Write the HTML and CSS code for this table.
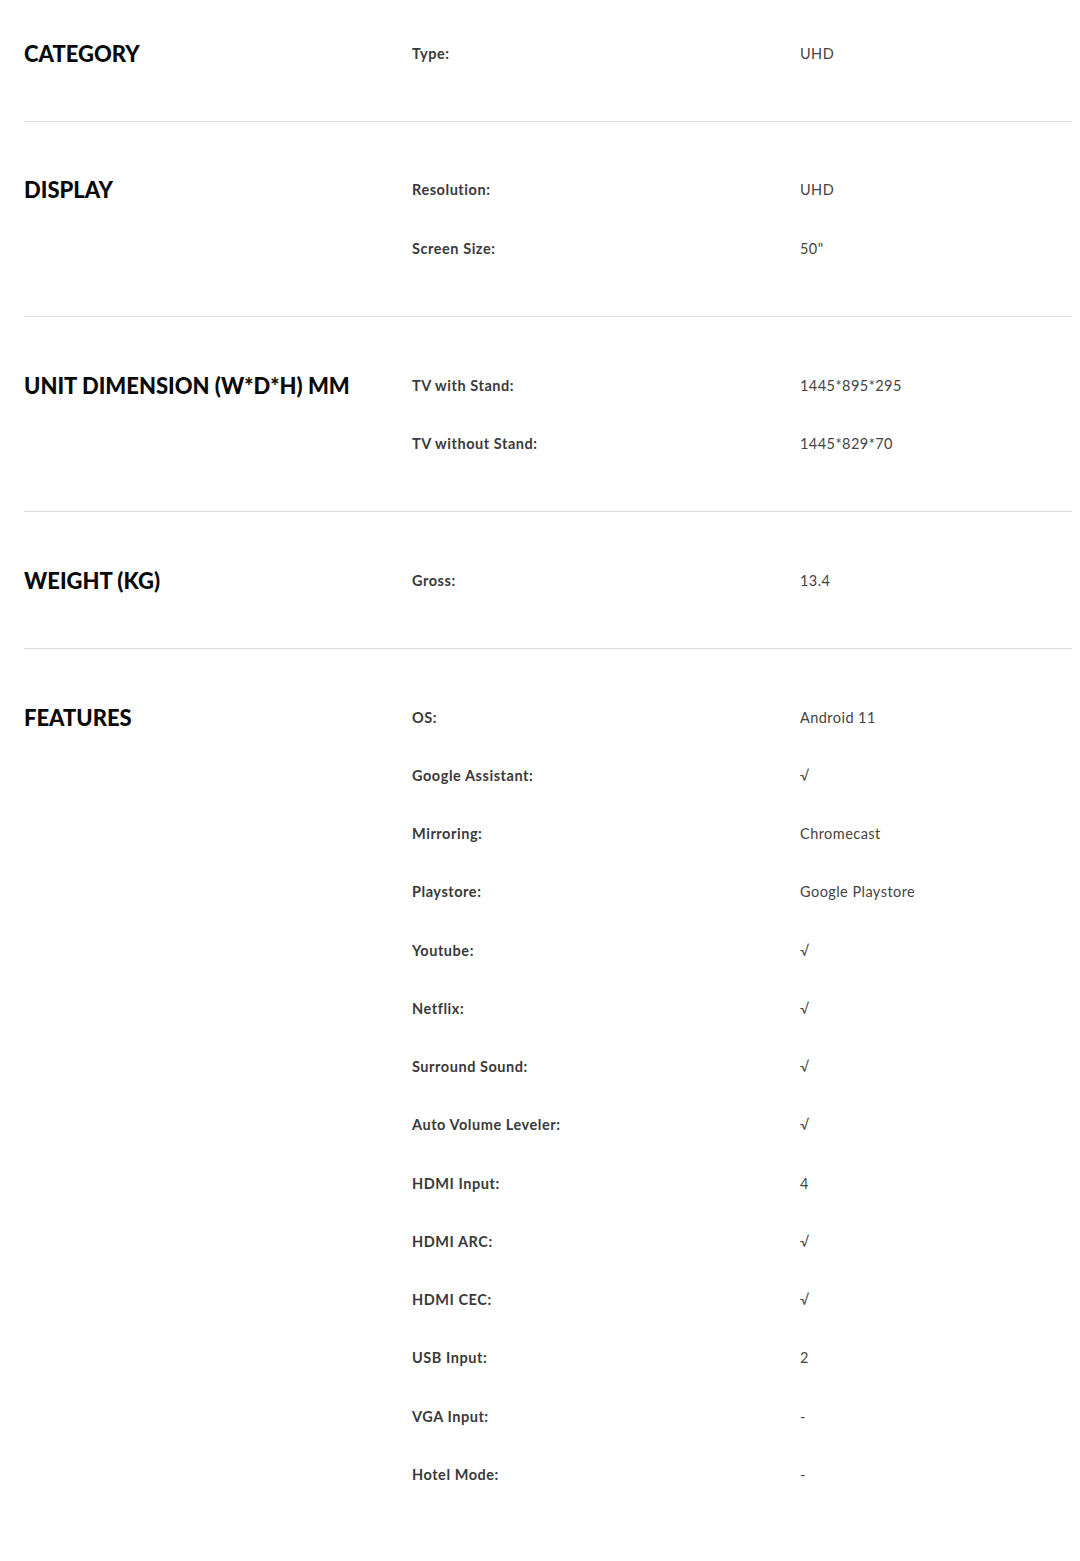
FILE: index.html
```html
<!DOCTYPE html>
<html lang="en">
<head>
<meta charset="utf-8">
<title>Specifications</title>
<link rel="stylesheet" href="styles.css">
</head>
<body>
<div class="specs">
  <section class="group first">
    <h2 class="group-title">CATEGORY</h2>
    <div class="rows">
      <div class="row"><span class="label">Type:</span><span class="value">UHD</span></div>
    </div>
  </section>
  <section class="group">
    <h2 class="group-title">DISPLAY</h2>
    <div class="rows">
      <div class="row"><span class="label">Resolution:</span><span class="value">UHD</span></div>
      <div class="row"><span class="label">Screen Size:</span><span class="value">50"</span></div>
    </div>
  </section>
  <section class="group">
    <h2 class="group-title">UNIT DIMENSION (W*D*H) MM</h2>
    <div class="rows">
      <div class="row"><span class="label">TV with Stand:</span><span class="value">1445*895*295</span></div>
      <div class="row"><span class="label">TV without Stand:</span><span class="value">1445*829*70</span></div>
    </div>
  </section>
  <section class="group">
    <h2 class="group-title">WEIGHT (KG)</h2>
    <div class="rows">
      <div class="row"><span class="label">Gross:</span><span class="value">13.4</span></div>
    </div>
  </section>
  <section class="group last">
    <h2 class="group-title">FEATURES</h2>
    <div class="rows">
      <div class="row"><span class="label">OS:</span><span class="value">Android 11</span></div>
      <div class="row"><span class="label">Google Assistant:</span><span class="value">√</span></div>
      <div class="row"><span class="label">Mirroring:</span><span class="value">Chromecast</span></div>
      <div class="row"><span class="label">Playstore:</span><span class="value">Google Playstore</span></div>
      <div class="row"><span class="label">Youtube:</span><span class="value">√</span></div>
      <div class="row"><span class="label">Netflix:</span><span class="value">√</span></div>
      <div class="row"><span class="label">Surround Sound:</span><span class="value">√</span></div>
      <div class="row"><span class="label">Auto Volume Leveler:</span><span class="value">√</span></div>
      <div class="row"><span class="label">HDMI Input:</span><span class="value">4</span></div>
      <div class="row"><span class="label">HDMI ARC:</span><span class="value">√</span></div>
      <div class="row"><span class="label">HDMI CEC:</span><span class="value">√</span></div>
      <div class="row"><span class="label">USB Input:</span><span class="value">2</span></div>
      <div class="row"><span class="label">VGA Input:</span><span class="value">-</span></div>
      <div class="row"><span class="label">Hotel Mode:</span><span class="value">-</span></div>
    </div>
  </section>
</div>
</body>
</html>
```

FILE: styles.css
```css
html, body {
  margin: 0;
  padding: 0;
  background: #ffffff;
}

.specs {
  padding: 0 8px 0 24px;
  font-family: Lato, "Liberation Sans", sans-serif;
}

.group {
  display: grid;
  grid-template-columns: 388px 1fr;
  padding: 39px 0 38.6px;
  border-bottom: 1px solid #d8dee2;
}

.group.first {
  padding-top: 24px;
}

.group.last {
  border-bottom: none;
}

.group-title {
  margin: 0;
  height: 58.25px;
  display: flex;
  align-items: center;
  font-family: Lato, "Liberation Sans", sans-serif;
  font-weight: 900;
  font-size: 22px;
  letter-spacing: 0;
  color: #0a0a0a;
}

.rows {
  display: flex;
  flex-direction: column;
}

.row {
  display: grid;
  grid-template-columns: 388px 1fr;
  height: 58.25px;
  align-items: center;
}

.label {
  font-family: Lato, "Liberation Sans", sans-serif;
  font-weight: 700;
  color: #3a3a3a;
  font-size: 14.5px;
  letter-spacing: 0.55px;
}

.value {
  font-family: Lato, "Liberation Sans", sans-serif;
  color: #444444;
  font-size: 14.5px;
  letter-spacing: 0.45px;
}
```
